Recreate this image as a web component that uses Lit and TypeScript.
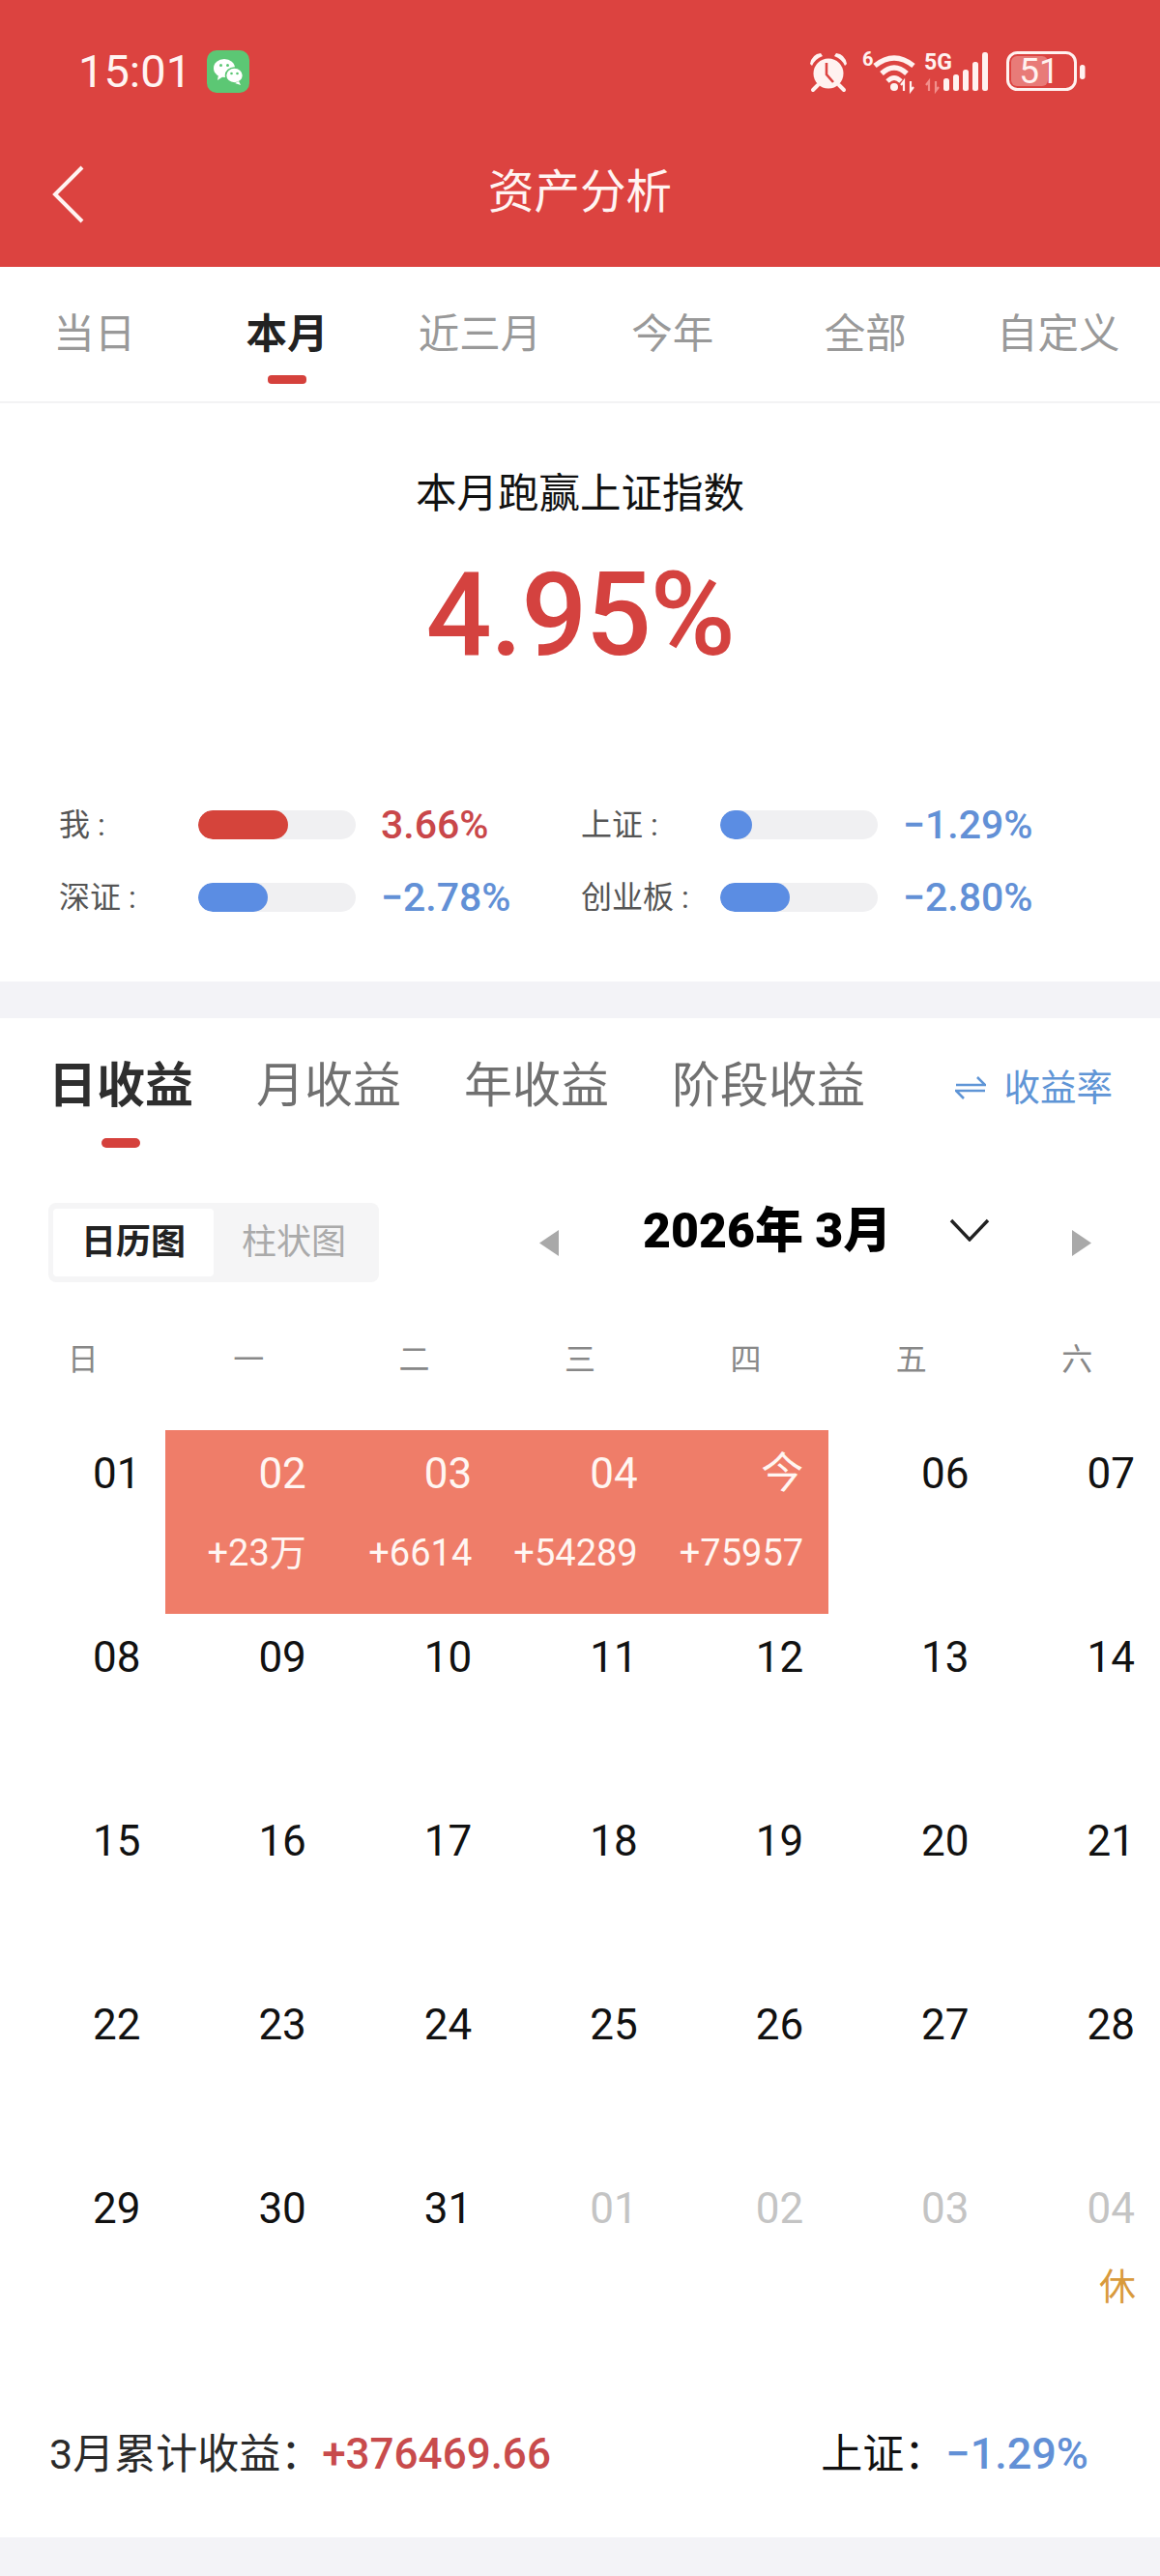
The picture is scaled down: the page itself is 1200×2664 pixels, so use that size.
import { LitElement, html, css, svg } from "lit";
import { customElement } from "lit/decorators.js";
import { classMap } from "lit/directives/class-map.js";

interface Stat { label: string; pct: number; value: string; up: boolean; }
interface Day { d: string; amount?: string; dim?: boolean; hot?: boolean; note?: string; }

const RANGES = ["当日", "本月", "近三月", "今年", "全部", "自定义"];
const EARNINGS = ["日收益", "月收益", "年收益", "阶段收益"];
const WEEK = ["日", "一", "二", "三", "四", "五", "六"];
const STATS: Stat[] = [
  { label: "我 :", pct: 57, value: "3.66%", up: true },
  { label: "上证 :", pct: 20, value: "−1.29%", up: false },
  { label: "深证 :", pct: 44, value: "−2.78%", up: false },
  { label: "创业板 :", pct: 44, value: "−2.80%", up: false },
];

const pad = (n: number) => String(n).padStart(2, "0");
const DAYS: Day[] = [];
for (let n = 1; n <= 31; n++) DAYS.push({ d: pad(n) });
DAYS[1] = { d: "02", amount: "+23万", hot: true };
DAYS[2] = { d: "03", amount: "+6614", hot: true };
DAYS[3] = { d: "04", amount: "+54289", hot: true };
DAYS[4] = { d: "今", amount: "+75957", hot: true };
DAYS.push({ d: "01", dim: true }, { d: "02", dim: true }, { d: "03", dim: true }, { d: "04", dim: true, note: "休" });

const alarmIcon = svg`<svg class="ic" width="40" height="42" viewBox="0 0 40 42">
  <circle cx="20" cy="23" r="15.5" fill="#fff2f0"/>
  <path d="M18 12v12l7 8" fill="none" stroke="#dd4341" stroke-width="2.6"/>
  <path d="M1 13 Q3 3 12 2 L14 5 Q6 8 3 15Z M39 13 Q37 3 28 2 L26 5 Q34 8 37 15Z" fill="#fff2f0"/>
  <path d="M9 35 L4 40 M31 35 L36 40" stroke="#fff2f0" stroke-width="4" stroke-linecap="round"/>
</svg>`;

const wifiIcon = svg`<svg class="ic" width="56" height="42" viewBox="0 0 56 42">
  <text x="0" y="15" font-size="20" font-weight="700" fill="#fff2f0" font-family="Roboto, sans-serif">6</text>
  <path d="M13 15 Q33 -1 53 15" fill="none" stroke="#fff2f0" stroke-width="5.4"/>
  <path d="M20 23 Q33 11 46 23" fill="none" stroke="#fff2f0" stroke-width="5.4"/>
  <path d="M26 31 Q33 24 40 31" fill="none" stroke="#fff2f0" stroke-width="4.8"/>
  <circle cx="33" cy="37" r="4" fill="#fff2f0"/>
  <path d="M43 41V31l-3 4M50 31v10l3-4" fill="none" stroke="#fff2f0" stroke-width="2.2"/>
</svg>`;

const signalIcon = svg`<svg class="ic" width="68" height="42" viewBox="0 0 68 42">
  <text x="0" y="19" font-size="23" font-weight="700" fill="#fff2f0" font-family="Roboto, sans-serif">5G</text>
  <path d="M5 41V31l-3 4M12 31v10l3-4" fill="none" stroke="#f28f8b" stroke-width="2.2"/>
  <g fill="#fff2f0">
    <rect x="20" y="28" width="6" height="13" rx="2.5"/>
    <rect x="30" y="24" width="6" height="17" rx="2.5"/>
    <rect x="40" y="19" width="6" height="22" rx="2.5"/>
    <rect x="50" y="11" width="6" height="30" rx="2.5"/>
    <rect x="60" y="1" width="6" height="40" rx="2.5"/>
  </g>
</svg>`;

const batteryIcon = svg`<svg class="ic" width="82" height="42" viewBox="0 0 82 42">
  <rect x="1.5" y="1.5" width="70" height="38" rx="10" fill="none" stroke="#fff2f0" stroke-width="3"/>
  <rect x="5" y="5" width="38" height="31" rx="6" fill="#e87b78"/>
  <text x="34" y="33" text-anchor="middle" font-size="37" fill="#fff2f0" font-family="Roboto, sans-serif">51</text>
  <rect x="76" y="14" width="5.5" height="15" rx="2.7" fill="#fff2f0"/>
</svg>`;

const wechatIcon = svg`<svg width="44" height="44" viewBox="0 0 44 44">
  <rect width="44" height="44" rx="10" fill="#5cc774"/>
  <ellipse cx="18" cy="18.5" rx="11" ry="9.5" fill="#fff"/>
  <path d="M12 25l-1 6 6-4z" fill="#fff"/>
  <ellipse cx="28.5" cy="26" rx="9" ry="8" fill="#fff" stroke="#5cc774" stroke-width="1.6"/>
  <path d="M33 32l2 4-6-2z" fill="#fff"/>
  <circle cx="14.5" cy="15.5" r="1.5" fill="#5cc774"/><circle cx="21.5" cy="15.5" r="1.5" fill="#5cc774"/>
  <circle cx="25.5" cy="24" r="1.3" fill="#5cc774"/><circle cx="31.5" cy="24" r="1.3" fill="#5cc774"/>
</svg>`;

@customElement("app-root")
export class AppRoot extends LitElement {
  static styles = css`
    :host {
      display: block;
      width: 1200px;
      height: 2664px;
      overflow: hidden;
      background: #f3f3f7;
      font-family: Roboto, "Noto Sans CJK SC", sans-serif;
    }
    .ic { display: block; overflow: visible; }

    /* red app bar */
    .head { height: 276px; background: #dc4340; color: #fff4f2; }
    .status { display: flex; align-items: center; height: 44px; padding: 52px 77px 0 81px; }
    .clock { font-size: 47px; line-height: 44px; width: 133px; }
    .status-right { margin-left: auto; display: flex; align-items: center; gap: 12px; }
    .status-right .ic:nth-child(2) { margin-left: 3px; }
    .status-right .ic:nth-child(3) { margin-left: -4px; }
    .status-right .ic:nth-child(4) { margin-left: 5px; }
    .nav { position: relative; display: flex; justify-content: center; align-items: center; height: 58px; margin-top: 74px; }
    .nav-title { font-size: 47.5px; line-height: 58px; }
    .back { position: absolute; left: 54px; top: 1px; }

    /* period tabs */
    .ranges { display: grid; grid-template-columns: repeat(6, 199.4px); background: #fff; border-bottom: 2px solid #f3f3f4; height: 139px; }
    .range { display: flex; flex-direction: column; align-items: center; padding-top: 41px; margin-left: -4px; font-size: 42.5px; line-height: 58px; color: #999; }
    .range.on { color: #222; font-weight: 700; }
    .pill { width: 40px; height: 9px; border-radius: 4px; background: #d5413c; margin-top: 13px; }

    /* headline */
    .hero { background: #fff; height: 598px; box-sizing: border-box; padding-top: 64px; text-align: center; }
    .hero-title { font-size: 42.5px; line-height: 60px; color: #111; }
    .hero-num { font-size: 120px; letter-spacing: -1.5px; line-height: 130px; font-weight: 500; color: #d4423f; margin-top: 30px; }
    .stats { display: grid; grid-template-columns: 540px 540px; row-gap: 45px; padding-left: 61px; margin-top: 137px; text-align: left; }
    .stat { display: flex; align-items: center; height: 30px; }
    .stat-label { width: 144px; margin-bottom: 6px; font-size: 32px; color: #555; white-space: nowrap; }
    .track { width: 163px; height: 30px; border-radius: 15px; background: #f0f0f2; overflow: hidden; }
    .fill { height: 100%; border-radius: 15px; background: #5b8de3; }
    .fill.up { background: #d5443b; }
    .stat-val { margin-left: 26px; font-size: 41px; font-weight: 500; color: #6290d6; }
    .stat-val.up { color: #c9474a; }

    /* earnings card */
    .card { margin-top: 38px; background: #fff; height: 1571px; }
    .kinds { display: flex; gap: 65px; padding: 40px 49px 0 50px; align-items: flex-start; }
    .kind { display: flex; flex-direction: column; align-items: center; font-size: 50px; line-height: 60px; color: #707070; }
    .kind.on { color: #2e2e2e; font-weight: 700; }
    .kind .pill { height: 10px; margin-top: 24px; border-radius: 5px; }
    .switch { margin-left: auto; display: flex; align-items: center; gap: 19px; font-size: 37.5px; line-height: 60px; color: #5f95d6; margin-top: 2px; }
    .tools { display: flex; align-items: center; padding-left: 50px; margin-top: 56px; }
    .seg { display: flex; width: 342px; height: 82px; box-sizing: border-box; padding: 6px 5px; background: #f5f5f6; border-radius: 8px; }
    .seg-item { width: 167px; text-align: center; font-size: 36px; line-height: 70px; color: #aaa; }
    .seg-item.on { background: #fff; color: #222; font-weight: 700; border-radius: 4px; }
    .arrow-l { margin-left: 166px; }
    .month { margin-left: 87px; margin-bottom: 24px; font-size: 50px; font-weight: 900; line-height: 60px; color: #000; white-space: pre; width: 253px; }
    .chev { margin-left: 64px; margin-bottom: 26px; }
    .arrow-r { margin-left: 85px; }
    .week { display: grid; grid-template-columns: repeat(7, 1fr); margin-top: 53px; font-size: 32px; line-height: 52px; color: #888; text-align: center; }
    .cal { display: grid; grid-template-columns: repeat(7, 1fr); margin-top: 47px; }
    .cell { height: 190px; box-sizing: border-box; padding: 20px 26px 0 0; display: flex; flex-direction: column; align-items: flex-end; }
    .date { font-size: 44px; line-height: 50px; color: #111; }
    .cell.dim .date { color: #c4c4c4; }
    .cell.hot { background: #ef7d69; }
    .cell.hot .date, .amount { color: #fff6f2; }
    .amount { font-size: 38px; line-height: 50px; margin-top: 32px; white-space: nowrap; }
    .note { font-size: 38px; line-height: 50px; margin-top: 31px; margin-right: -1px; color: #d99a3c; }
    .sum { display: flex; justify-content: space-between; padding: 79px 74px 0 51px; font-size: 43px; line-height: 60px; color: #2a2a2a; }
    .sum .pos { color: #c84b4c; font-size: 44px; font-weight: 500; }
    .sum .neg { color: #6290d6; font-size: 45px; font-weight: 500; }
    .sum .idx { color: #111; }
  `;

  private renderStat(s: Stat) {
    return html`<div class="stat">
      <span class="stat-label">${s.label}</span>
      <div class="track"><div class=${classMap({ fill: true, up: s.up })} style="width:${s.pct}%"></div></div>
      <span class=${classMap({ "stat-val": true, up: s.up })}>${s.value}</span>
    </div>`;
  }

  private renderDay(day: Day) {
    return html`<div class=${classMap({ cell: true, hot: !!day.hot, dim: !!day.dim })}>
      <span class="date">${day.d}</span>
      ${day.amount ? html`<span class="amount">${day.amount}</span>` : ""}
      ${day.note ? html`<span class="note">${day.note}</span>` : ""}
    </div>`;
  }

  render() {
    return html`
      <header class="head">
        <div class="status">
          <span class="clock">15:01</span>
          ${wechatIcon}
          <div class="status-right">${alarmIcon}${wifiIcon}${signalIcon}${batteryIcon}</div>
        </div>
        <div class="nav">
          <svg class="back" width="34" height="60" viewBox="0 0 34 60"><path d="M31 2 L3 30 L31 58" fill="none" stroke="#fff4f2" stroke-width="4"/></svg>
          <span class="nav-title">资产分析</span>
        </div>
      </header>

      <nav class="ranges">
        ${RANGES.map((r, i) => html`<div class=${classMap({ range: true, on: i === 1 })}>
          <span>${r}</span>${i === 1 ? html`<i class="pill"></i>` : ""}
        </div>`)}
      </nav>

      <section class="hero">
        <div class="hero-title">本月跑赢上证指数</div>
        <div class="hero-num">4.95%</div>
        <div class="stats">${STATS.map((s) => this.renderStat(s))}</div>
      </section>

      <section class="card">
        <div class="kinds">
          ${EARNINGS.map((k, i) => html`<div class=${classMap({ kind: true, on: i === 0 })}>
            <span>${k}</span>${i === 0 ? html`<i class="pill"></i>` : ""}
          </div>`)}
          <div class="switch">
            <svg width="32" height="26" viewBox="0 0 32 26"><path d="M1 10H31L23 2M31 16H1L9 24" fill="none" stroke="#5f95d6" stroke-width="2.6"/></svg>
            <span>收益率</span>
          </div>
        </div>
        <div class="tools">
          <div class="seg">
            <div class="seg-item on">日历图</div>
            <div class="seg-item">柱状图</div>
          </div>
          <svg class="arrow-l" width="20" height="27" viewBox="0 0 20 27"><path d="M20 0V27L0 13.5Z" fill="#a9a9a9"/></svg>
          <span class="month">2026年 3月</span>
          <svg class="chev" width="42" height="24" viewBox="0 0 42 24"><path d="M2 2L21 22L40 2" fill="none" stroke="#222" stroke-width="3.4"/></svg>
          <svg class="arrow-r" width="20" height="27" viewBox="0 0 20 27"><path d="M0 0V27L20 13.5Z" fill="#a9a9a9"/></svg>
        </div>
        <div class="week">${WEEK.map((w) => html`<span>${w}</span>`)}</div>
        <div class="cal">${DAYS.map((d) => this.renderDay(d))}</div>
        <div class="sum">
          <span>3月累计收益：<span class="pos">+376469.66</span></span>
          <span><span class="idx">上证：</span><span class="neg">−1.29%</span></span>
        </div>
      </section>
    `;
  }
}
